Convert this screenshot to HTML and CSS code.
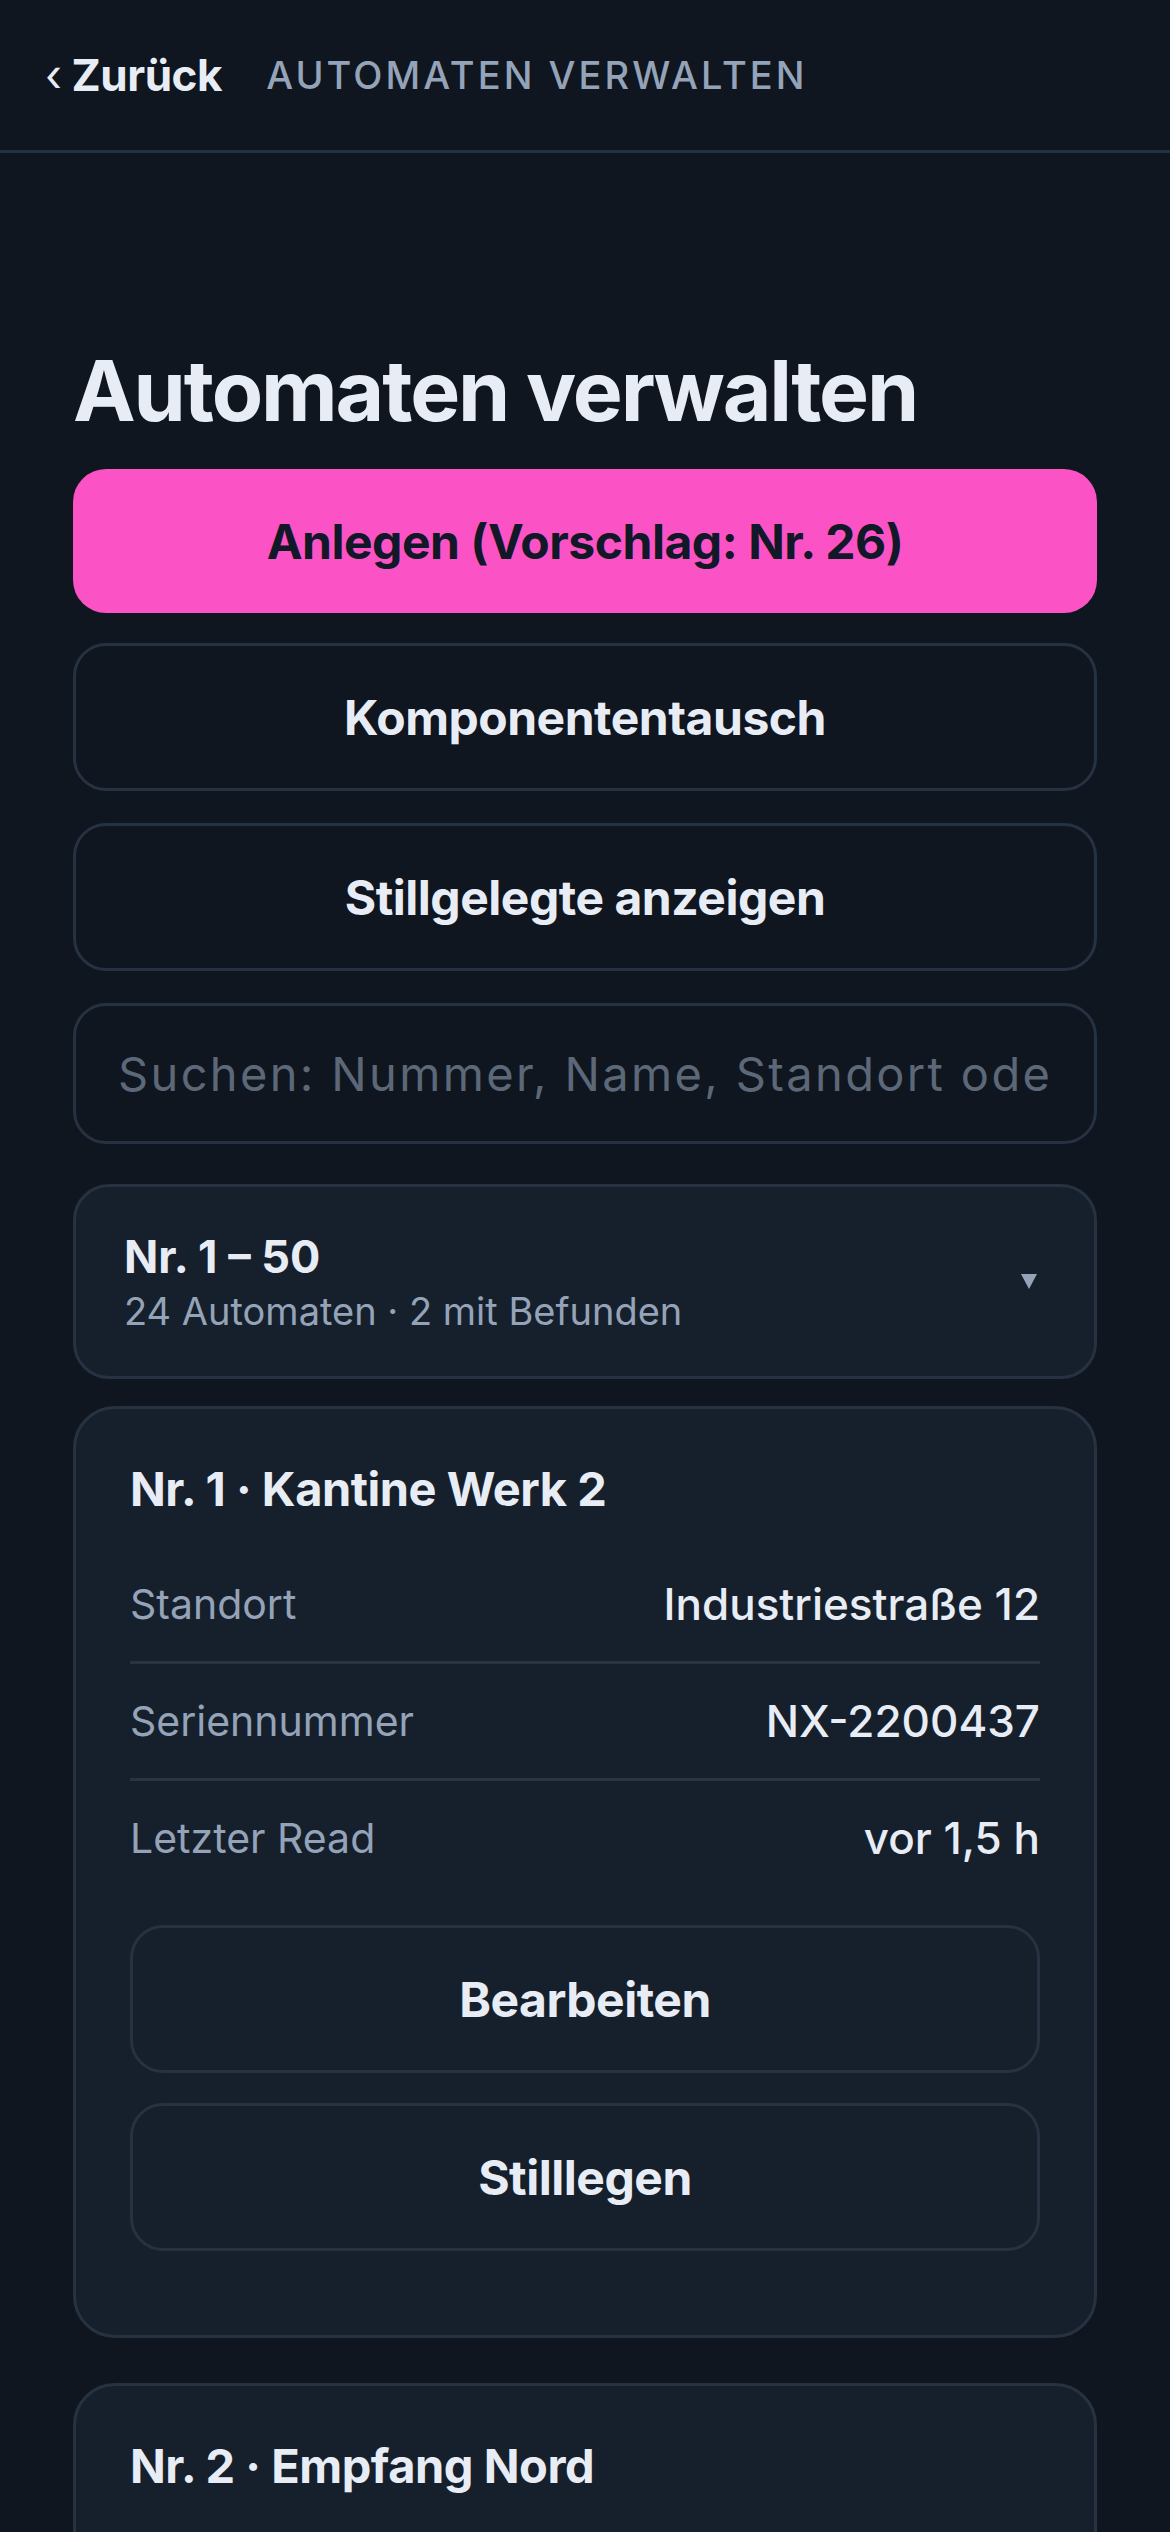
FILE: index.html
```html
<!DOCTYPE html>
<html lang="de">
<head>
  <meta charset="UTF-8">
  <title>Automaten verwalten</title>
  <link rel="stylesheet" href="styles.css">
</head>
<body>

<header class="topbar">
  <a class="back" href="#"><span class="chev">‹</span> Zurück</a>
  <span class="crumb">AUTOMATEN VERWALTEN</span>
</header>

<main class="page">
  <h1>Automaten verwalten</h1>

  <button class="btn primary">Anlegen (Vorschlag: Nr. 26)</button>
  <button class="btn">Komponententausch</button>
  <button class="btn">Stillgelegte anzeigen</button>

  <input class="search" type="text" placeholder="Suchen: Nummer, Name, Standort oder Seriennummer">

  <div class="group">
    <div>
      <div class="group-title">Nr. 1 – 50</div>
      <div class="group-sub">24 Automaten · 2 mit Befunden</div>
    </div>
    <span class="caret"></span>
  </div>

  <div class="card">
    <div class="card-title">Nr. 1 · Kantine Werk 2</div>
    <div class="rows">
      <div class="row"><span class="label">Standort</span><span class="value">Industriestraße 12</span></div>
      <div class="row"><span class="label">Seriennummer</span><span class="value">NX-2200437</span></div>
      <div class="row"><span class="label">Letzter Read</span><span class="value">vor 1,5 h</span></div>
    </div>
    <button class="btn inner">Bearbeiten</button>
    <button class="btn inner">Stilllegen</button>
  </div>

  <div class="card">
    <div class="card-title">Nr. 2 · Empfang Nord</div>
  </div>
</main>

</body>
</html>
```

FILE: styles.css
```css
* {
  box-sizing: border-box;
}

html, body {
  height: 2532px;
}

body {
  margin: 0;
  background: #0f1620;
  color: #e8edf5;
  font-family: Inter, "Noto Sans", sans-serif;
  overflow: hidden;
}

.topbar {
  height: 153px;
  display: flex;
  align-items: center;
  gap: 44px;
  padding: 0 45px;
  border-bottom: 3px solid #253040;
}

.back {
  color: #e8edf5;
  text-decoration: none;
  font-size: 44px;
  font-weight: 700;
  letter-spacing: -0.01em;
}

.chev {
  font-weight: 400;
}

.crumb {
  color: #94a3b8;
  font-size: 38px;
  font-weight: 500;
  letter-spacing: 0.08em;
}

.page {
  padding: 0 73px;
  display: flex;
  flex-direction: column;
}

h1 {
  margin: 188px 0 28px;
  font-size: 84px;
  line-height: 100px;
  font-weight: 700;
  letter-spacing: -0.025em;
}

.btn {
  display: block;
  width: 100%;
  height: 148px;
  margin-bottom: 32px;
  background: transparent;
  border: 3px solid #263241;
  border-radius: 33px;
  color: #e8edf5;
  font-family: inherit;
  font-size: 48px;
  font-weight: 700;
  letter-spacing: -0.01em;
}

.btn.primary {
  height: 144px;
  margin-bottom: 30px;
  background: #fb53c5;
  border: none;
  color: #111827;
}

.search {
  width: 100%;
  height: 141px;
  margin-bottom: 40px;
  padding: 0 42px;
  background: #0f1620;
  border: 3px solid #263241;
  border-radius: 33px;
  color: #e8edf5;
  font-family: inherit;
  font-size: 47px;
  letter-spacing: 0.05em;
}

.search::placeholder {
  color: #5c6878;
}

.group {
  height: 195px;
  display: flex;
  align-items: center;
  justify-content: space-between;
  padding: 0 57px 0 48px;
  margin-bottom: 27px;
  background: #16202c;
  border: 3px solid #263241;
  border-radius: 36px;
}

.group-title {
  font-size: 45px;
  font-weight: 700;
  line-height: 54px;
}

.group-sub {
  margin-top: 4px;
  color: #94a3b8;
  font-size: 38px;
  line-height: 46px;
}

.caret {
  width: 0;
  height: 0;
  border-left: 8px solid transparent;
  border-right: 8px solid transparent;
  border-top: 15px solid #94a3b8;
}

.card {
  display: flex;
  flex-direction: column;
  padding: 50px 54px 54px;
  margin-bottom: 45px;
  background: #16202c;
  border: 3px solid #263241;
  border-radius: 42px;
}

.card-title {
  font-size: 47px;
  font-weight: 700;
  line-height: 60px;
  letter-spacing: -0.01em;
  margin-bottom: 28px;
}

.rows {
  margin-bottom: 30px;
}

.row {
  display: flex;
  justify-content: space-between;
  padding: 32px 0;
  font-size: 41px;
  line-height: 50px;
  border-bottom: 3px solid #283442;
}

.row:last-child {
  border-bottom: none;
}

.label {
  color: #94a3b8;
}

.value {
  font-size: 44px;
  font-weight: 500;
}

.btn.inner {
  margin-bottom: 30px;
}
```
